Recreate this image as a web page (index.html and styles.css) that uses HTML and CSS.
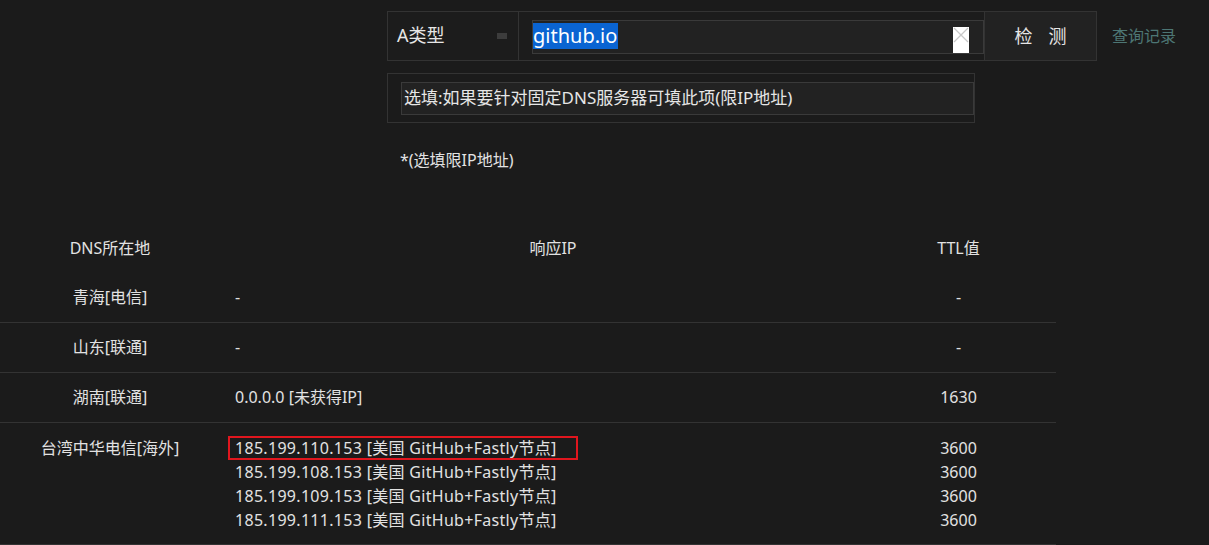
FILE: index.html
```html
<!DOCTYPE html>
<html lang="zh">
<head>
<meta charset="utf-8">
<title>DNS检测</title>
<link rel="stylesheet" href="styles.css">
</head>
<body>
<div class="form">
  <div class="row1">
    <div class="combo">
      <div class="type">
        <span class="type-label">A类型</span>
        <span class="type-mark"></span>
      </div>
      <div class="domain-cell">
        <div class="domain-input">
          <span class="sel">github.io</span>
          <span class="clear">
            <svg width="16" height="26" viewBox="0 0 16 26"><rect width="16" height="26" fill="#fff"/><path d="M1 1 L15 15 M15 1 L1 15" stroke="#c8c8c8" stroke-width="1.3" fill="none"/></svg>
          </span>
        </div>
      </div>
    </div>
    <button class="check"><span>检</span><span>测</span></button>
    <a class="history">查询记录</a>
  </div>
  <div class="row2">
    <div class="dns-input">选填:如果要针对固定DNS服务器可填此项(限IP地址)</div>
  </div>
  <div class="hint">*(选填限IP地址)</div>
</div>

<div class="tbl">
  <div class="tr head">
    <div class="c1">DNS所在地</div>
    <div class="c2 center">响应IP</div>
    <div class="c3">TTL值</div>
  </div>
  <div class="tr">
    <div class="c1">青海[电信]</div>
    <div class="c2">-</div>
    <div class="c3">-</div>
  </div>
  <div class="tr">
    <div class="c1">山东[联通]</div>
    <div class="c2">-</div>
    <div class="c3">-</div>
  </div>
  <div class="tr">
    <div class="c1">湖南[联通]</div>
    <div class="c2">0.0.0.0 [未获得IP]</div>
    <div class="c3">1630</div>
  </div>
  <div class="tr multi">
    <div class="c1">台湾中华电信[海外]</div>
    <div class="c2 ips">
      <div><span class="hl">185.199.110.153 [美国 GitHub+Fastly节点]</span></div>
      <div>185.199.108.153 [美国 GitHub+Fastly节点]</div>
      <div>185.199.109.153 [美国 GitHub+Fastly节点]</div>
      <div>185.199.111.153 [美国 GitHub+Fastly节点]</div>
    </div>
    <div class="c3">
      <div>3600</div>
      <div>3600</div>
      <div>3600</div>
      <div>3600</div>
    </div>
  </div>
</div>
</body>
</html>
```

FILE: styles.css
```css
html, body {
  margin: 0;
  padding: 0;
  background: #1b1b1b;
}
body {
  font-family: "Noto Sans", "Noto Sans CJK SC", sans-serif;
  color: #e2e2e2;
  width: 1209px;
  height: 545px;
  overflow: hidden;
}
.form {
  margin-left: 387px;
  padding-top: 11px;
}
.row1 {
  display: flex;
  align-items: center;
  height: 50px;
}
.combo {
  display: flex;
  width: 597px;
  height: 50px;
  box-sizing: border-box;
  border: 1px solid #333;
  border-right: none;
  background: #1c1c1c;
}
.type {
  width: 131px;
  flex: none;
  box-sizing: border-box;
  border-right: 1px solid #333;
  display: flex;
  align-items: center;
  padding-left: 9px;
  padding-bottom: 2px;
}
.type-label {
  font-size: 18px;
  line-height: 24px;
  color: #e6e6e6;
}
.type-mark {
  width: 10px;
  height: 6px;
  background: #3c3c3c;
  margin-left: 52px;
  margin-top: 2px;
}
.domain-cell {
  flex: 1;
  padding: 8px 0 0 13px;
}
.domain-input {
  width: 452px;
  height: 34px;
  box-sizing: border-box;
  border: 1px solid #3a3a3a;
  background: #222;
  display: flex;
  align-items: flex-start;
  padding-top: 2px;
}
.sel {
  background: #0a64d2;
  color: #fff;
  font-size: 20px;
  line-height: 26px;
  height: 26px;
  padding-right: 1px;
}
.clear {
  margin-left: auto;
  margin-right: 14px;
  margin-top: 4px;
  width: 16px;
  height: 26px;
  display: block;
}
.clear svg {
  display: block;
}
.check {
  width: 113px;
  height: 50px;
  box-sizing: border-box;
  border: 1px solid #333;
  background: #222;
  color: #e6e6e6;
  font-family: "Noto Sans", "Noto Sans CJK SC", sans-serif;
  font-size: 18px;
  display: flex;
  justify-content: center;
  align-items: center;
  gap: 16px;
  padding: 0 0 2px;
  margin: 0;
}
.history {
  margin-left: 15px;
  font-size: 16px;
  color: #4d7674;
  padding-bottom: 2px;
}
.row2 {
  margin-top: 12px;
  width: 588px;
  height: 50px;
  box-sizing: border-box;
  border: 1px solid #333;
  padding: 8px 0 0 13px;
}
.dns-input {
  width: 573px;
  height: 33px;
  box-sizing: border-box;
  border: 1px solid #3a3a3a;
  background: #222;
  font-size: 17px;
  line-height: 30px;
  padding-left: 2px;
  color: #e6e6e6;
  white-space: nowrap;
}
.hint {
  margin-top: 25px;
  margin-left: 13px;
  font-size: 16px;
  line-height: 24px;
  color: #e2e2e2;
}
.tbl {
  margin-top: 52px;
  width: 1056px;
  font-size: 16px;
  line-height: 24px;
}
.tr {
  display: grid;
  grid-template-columns: 220px 666px 170px;
  border-bottom: 1px solid #333;
}
.tr.head {
  border-bottom: none;
}
.tr > div {
  padding-top: 12px;
  padding-bottom: 13px;
}
.tr.multi > div {
  padding-top: 13px;
  padding-bottom: 12px;
}
.c1 {
  text-align: center;
}
.c2 {
  padding-left: 15px;
  white-space: nowrap;
}
.c2.center {
  padding-left: 0;
  text-align: center;
}
.ips {
  letter-spacing: 0.3px;
}
.c3 {
  text-align: center;
  padding-right: 25px;
}
.hl {
  display: inline-block;
  width: 350px;
  margin-left: -7px;
  padding-left: 7px;
  box-sizing: border-box;
  box-shadow: inset 0 0 0 2px #e0161e;
  vertical-align: top;
}
```
